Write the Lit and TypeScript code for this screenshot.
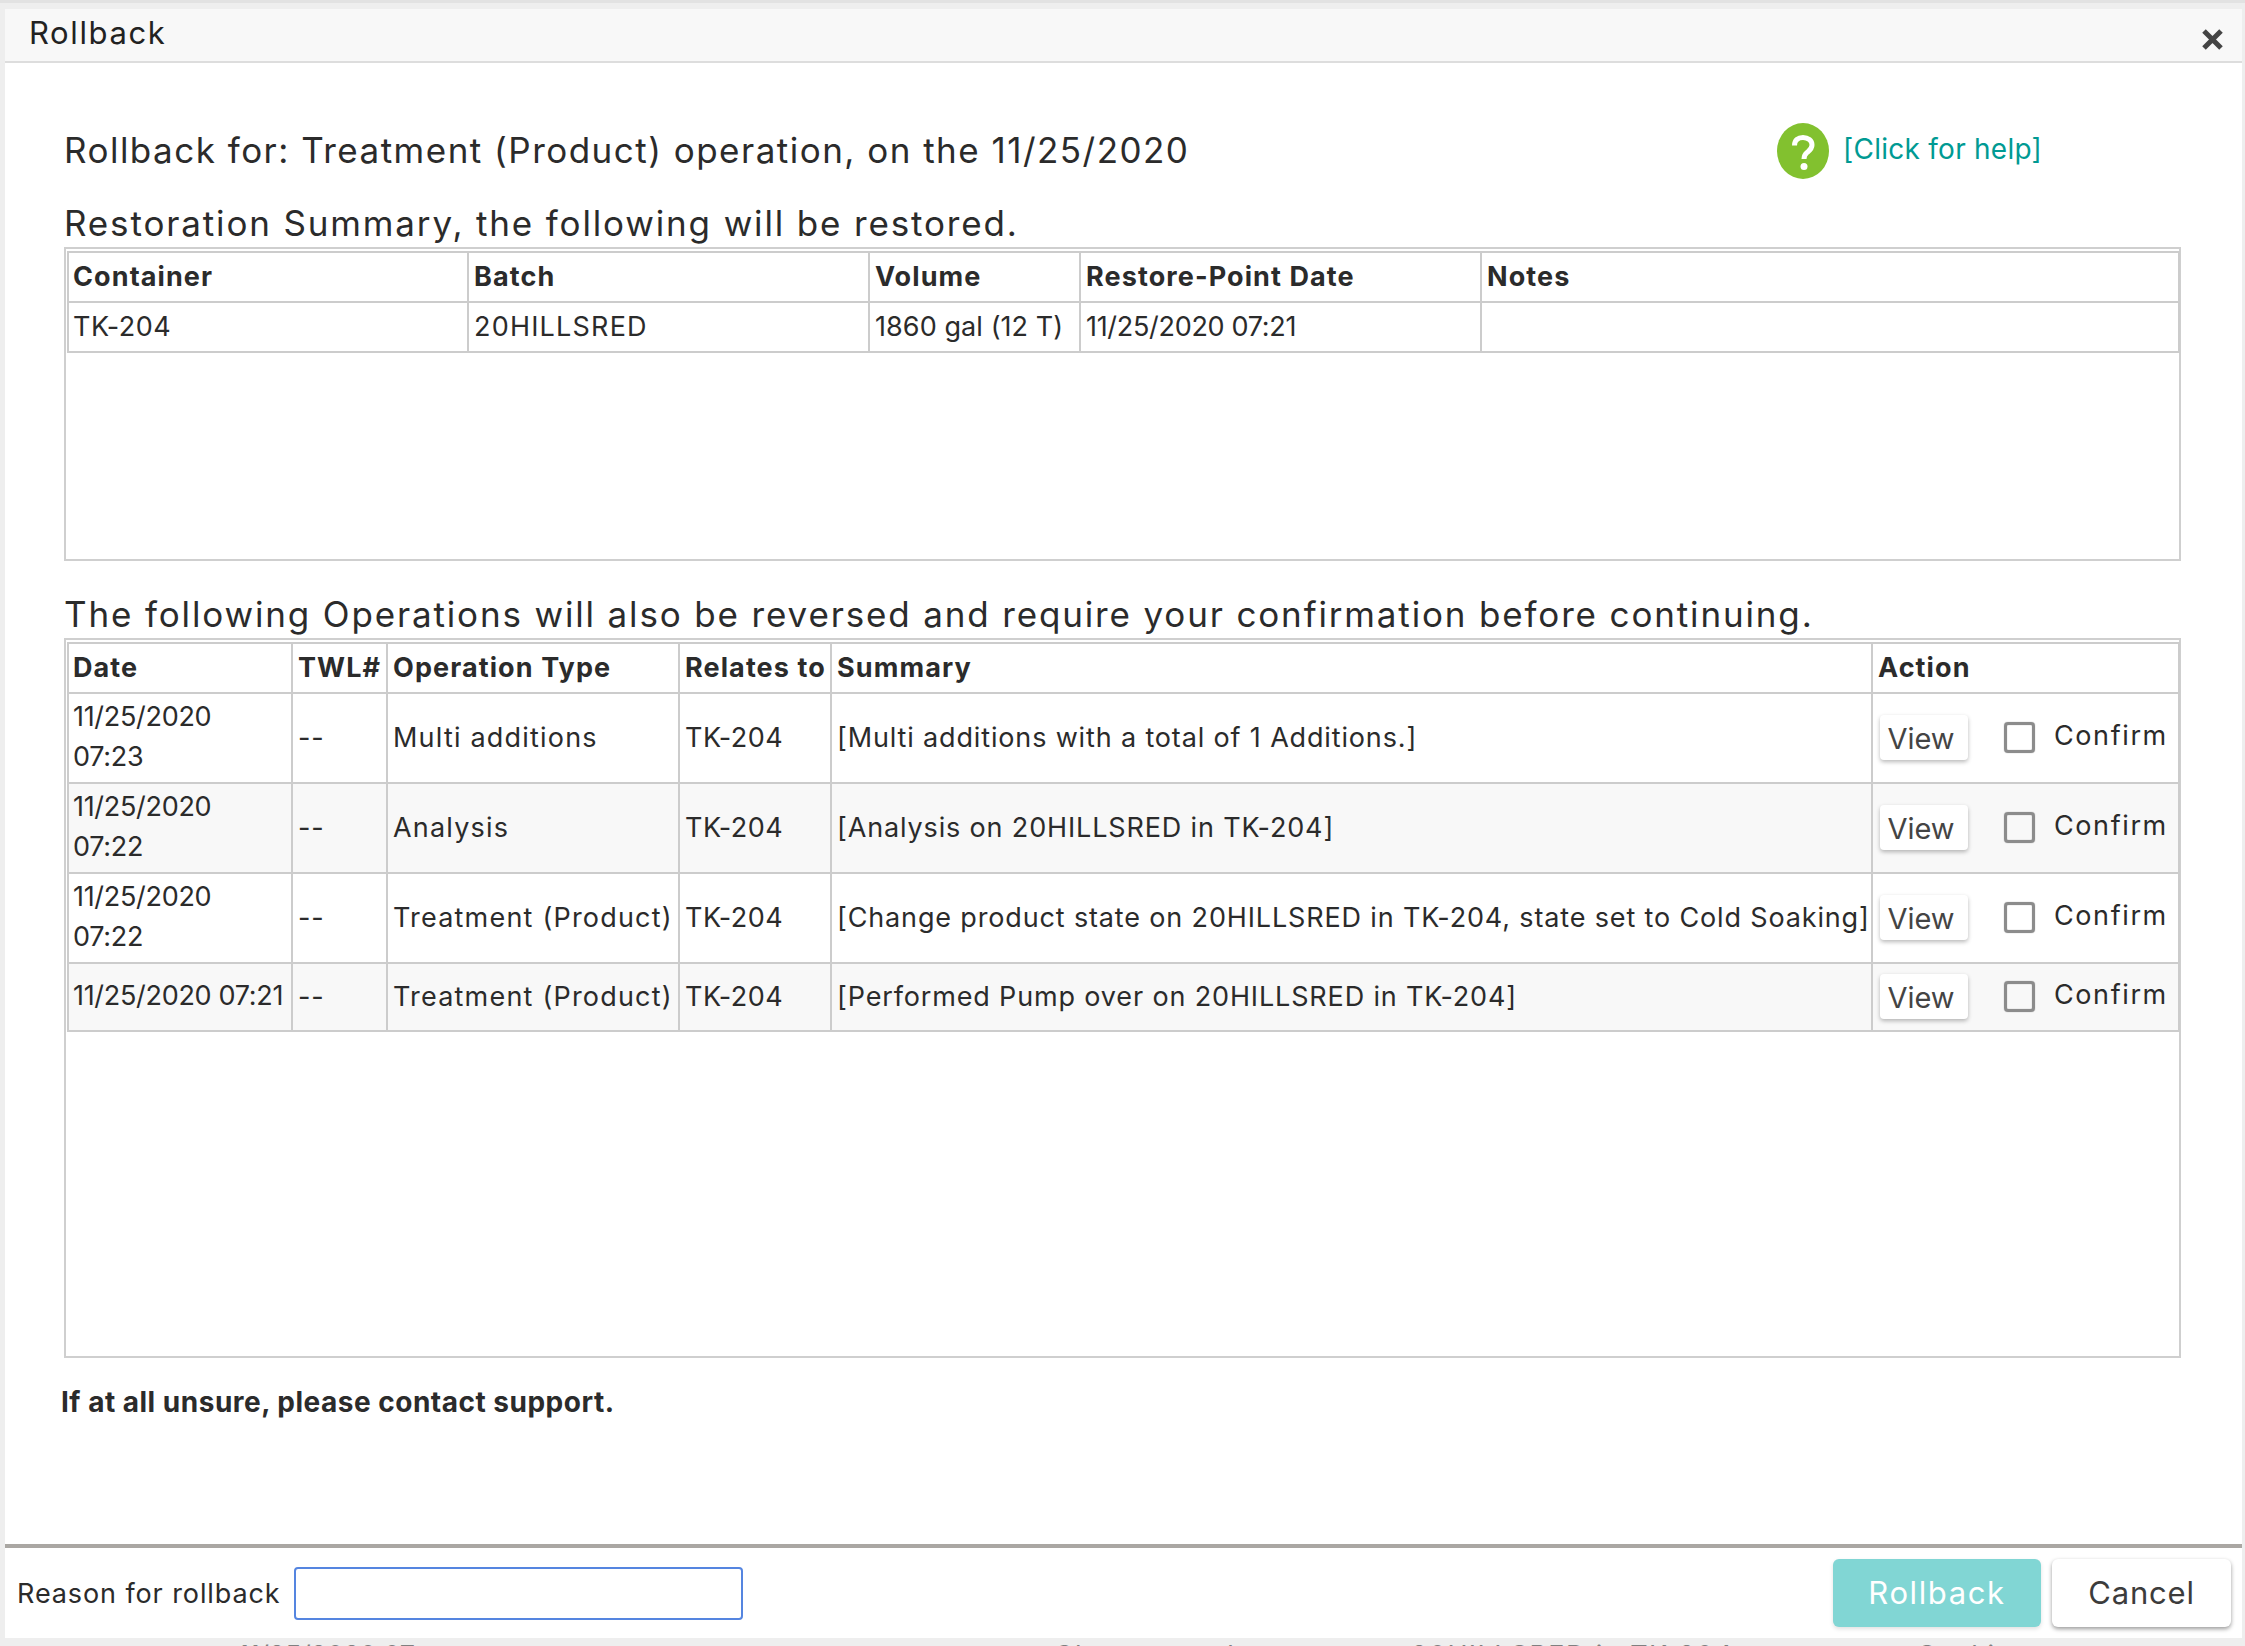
import { LitElement, html, css } from "lit";
import { customElement } from "lit/decorators.js";

const OPS = [
  { date: ["11/25/2020", "07:23"], type: "Multi additions", summary: "[Multi additions with a total of 1 Additions.]", tall: true },
  { date: ["11/25/2020", "07:22"], type: "Analysis", summary: "[Analysis on 20HILLSRED in TK-204]", tall: true },
  { date: ["11/25/2020", "07:22"], type: "Treatment (Product)", summary: "[Change product state on 20HILLSRED in TK-204, state set to Cold Soaking]", tall: true },
  { date: ["11/25/2020 07:21"], type: "Treatment (Product)", summary: "[Performed Pump over on 20HILLSRED in TK-204]", tall: false },
];

@customElement("app-root")
export class AppRoot extends LitElement {
  static styles = css`
    :host { display: block; width: 2245px; height: 1646px; overflow: hidden; background: #eeeeee; font-family: Inter, "DejaVu Sans", sans-serif; color: #2b2b2b; }
    .strip { height: 3px; background: #e2e2e2; }
    .dialog { margin: 6px 3px 0 5px; height: 1629px; background: #fff; display: flex; flex-direction: column; }
    .header { height: 54px; flex: none; box-sizing: border-box; background: #f8f8f8; border-bottom: 2px solid #dddddd; display: flex; justify-content: space-between; padding: 0 18px 0 24px; }
    .title { font-size: 31px; line-height: 40px; padding-top: 4px; color: #222; letter-spacing: 1.6px; }
    .close { width: 23px; height: 23px; margin-top: 19px; }
    .body { flex: 1; padding: 0 59px 0 59px; min-height: 0; }
    .top { display: flex; justify-content: space-between; height: 138px; padding-top: 65px; box-sizing: border-box; }
    .h1 { font-size: 35px; line-height: 44px; letter-spacing: 1.48px; margin: 0; font-weight: 400; color: #2b2b2b; }
    .help { display: flex; align-items: center; gap: 14px; margin-right: 141px; height: 56px; margin-top: -5px; }
    .help svg { width: 52px; height: 56px; }
    .help a { font-size: 28px; color: #009a93; text-decoration: none; letter-spacing: 0.25px; padding-bottom: 5px; }
    .sec { font-size: 35px; line-height: 44px; letter-spacing: 1.85px; margin: 0 0 2px; font-weight: 400; }
    .box { border: 2px solid #cfcfcf; box-sizing: border-box; width: 2117px; padding: 2px 0 0 1px; }
    .box.a { height: 314px; }
    .box.b { height: 720px; }
    .gap { height: 31px; }
    table { border-collapse: collapse; table-layout: fixed; border: 2px solid #cccccc; width: 2113px; font-size: 27px; letter-spacing: 0.85px; }
    th, td { border: 2px solid #cccccc; padding: 0 4px 2px; text-align: left; white-space: nowrap; overflow: visible; }
    th + th, td + td { padding-left: 5px; }
    th { font-weight: 700; height: 46px; color: #2b2b2b; letter-spacing: 1.1px; }
    .a td { height: 46px; }
    .b tr.alt td { background: #f8f8f8; }
    .b tr.tall td { height: 86px; }
    .b tr.short td { height: 64px; }
    .date { line-height: 40px; letter-spacing: -0.3px; }
    .num { letter-spacing: -0.3px; }
    .vol { letter-spacing: 0.08px; }
    .code { letter-spacing: 1.2px; }
    .tk { letter-spacing: 0.5px; }
    .type { letter-spacing: 1.2px; }
    .act { display: flex; align-items: center; padding-left: 2px; }
    .view { box-sizing: border-box; width: 88px; height: 45px; background: #fff; border: none; border-radius: 4px; box-shadow: 0 2px 4px rgba(0,0,0,.28); font: inherit; font-size: 29px; color: #444; padding: 3px 6px 0 0; }
    .chk { box-sizing: border-box; width: 31px; height: 31px; border: 3px solid #8c8c8c; border-radius: 4px; margin-left: 36px; margin-right: 19px; box-shadow: 0 0 1px #8c8c8c, inset 0 0 1px #8c8c8c; }
    .confirm { letter-spacing: 1.6px; padding-bottom: 3px; }
    .note { font-weight: 700; font-size: 28px; letter-spacing: 0.5px; margin: 0; padding: 26px 0 0 0; margin-left: -3px; line-height: 36px; }
    .footer { flex: none; height: 94px; box-sizing: border-box; border-top: 4px solid #aaa7a3; display: flex; align-items: center; padding: 0 11px 0 12px; }
    .lbl { font-size: 27px; letter-spacing: 0.9px; margin-right: 13px; }
    input { box-sizing: border-box; width: 449px; height: 53px; border: 2px solid #5585e0; border-radius: 4px; background: #fff; outline: none; }
    .sp { flex: 1; }
    .btn { box-sizing: border-box; height: 68px; border: none; border-radius: 6px; font: inherit; font-size: 31px; letter-spacing: 0.8px; padding: 0 0 2px; }
    .roll { width: 208px; background: #81d6d4; color: #fff; letter-spacing: 1.6px; box-shadow: 0 2px 4px rgba(0,0,0,.12); margin-right: 11px; }
    .cancel { width: 179px; background: #fff; color: #3c3c3c; box-shadow: 0 2px 4px rgba(0,0,0,.4); }
    .under { height: 8px; overflow: hidden; display: flex; font-size: 27px; color: #808080; line-height: 30px; padding: 3px 0 0 238px; box-sizing: border-box; white-space: nowrap; letter-spacing: 1.4px; }
    .under .first { flex: none; width: 816px; letter-spacing: -0.3px; }
  `;

  render() {
    return html`
      <div class="strip"></div>
      <div class="dialog">
        <div class="header">
          <div class="title">Rollback</div>
          <svg class="close" viewBox="0 0 23 23"><path d="M3 3 L20 20 M20 3 L3 20" stroke="#444" stroke-width="5" fill="none"/></svg>
        </div>
        <div class="body">
          <div class="top">
            <h1 class="h1">Rollback for: Treatment (Product) operation, on the 11/25/2020</h1>
            <div class="help">
              <svg viewBox="0 0 52 56"><ellipse cx="26" cy="28" rx="26" ry="28" fill="#82c12f"/><path d="M17.500 22.500c0-5.500 3.500-8 8.500-8s9 3 9 7.500c0 4-2.500 5.500-5 7.500-2 1.500-3 2.500-3 6.500" fill="none" stroke="#fff" stroke-width="5"/><circle cx="27" cy="43.500" r="3.500" fill="#fff"/></svg>
              <a href="#">[Click for help]</a>
            </div>
          </div>
          <p class="sec">Restoration Summary, the following will be restored.</p>
          <div class="box a">
            <table>
              <colgroup><col style="width:400px"/><col style="width:401px"/><col style="width:211px"/><col style="width:401px"/><col/></colgroup>
              <thead><tr><th>Container</th><th>Batch</th><th>Volume</th><th>Restore-Point Date</th><th>Notes</th></tr></thead>
              <tbody><tr><td class="tk">TK-204</td><td class="code">20HILLSRED</td><td class="vol">1860 gal (12 T)</td><td class="num">11/25/2020 07:21</td><td></td></tr></tbody>
            </table>
          </div>
          <div class="gap"></div>
          <p class="sec">The following Operations will also be reversed and require your confirmation before continuing.</p>
          <div class="box b">
            <table>
              <colgroup><col style="width:224px"/><col style="width:95px"/><col style="width:292px"/><col style="width:152px"/><col style="width:1041px"/><col/></colgroup>
              <thead><tr><th>Date</th><th>TWL#</th><th>Operation Type</th><th>Relates to</th><th>Summary</th><th>Action</th></tr></thead>
              <tbody>
                ${OPS.map((o, i) => html`
                  <tr class="${o.tall ? "tall" : "short"} ${i % 2 ? "alt" : ""}">
                    <td class="date">${o.date.map((d, j) => html`${j ? html`<br />` : ""}${d}`)}</td>
                    <td>--</td>
                    <td class="type">${o.type}</td>
                    <td class="tk">TK-204</td>
                    <td>${o.summary}</td>
                    <td><div class="act"><button class="view">View</button><span class="chk"></span><span class="confirm">Confirm</span></div></td>
                  </tr>`)}
              </tbody>
            </table>
          </div>
          <p class="note">If at all unsure, please contact support.</p>
        </div>
        <div class="footer">
          <span class="lbl">Reason for rollback</span>
          <input type="text" />
          <span class="sp"></span>
          <button class="btn roll">Rollback</button>
          <button class="btn cancel">Cancel</button>
        </div>
      </div>
      <div class="under" aria-hidden="true"><span class="first">11/25/2020 07</span><span>Change product state on 20HILLSRED in TK-204, state set to Soaking</span></div>
    `;
  }
}
